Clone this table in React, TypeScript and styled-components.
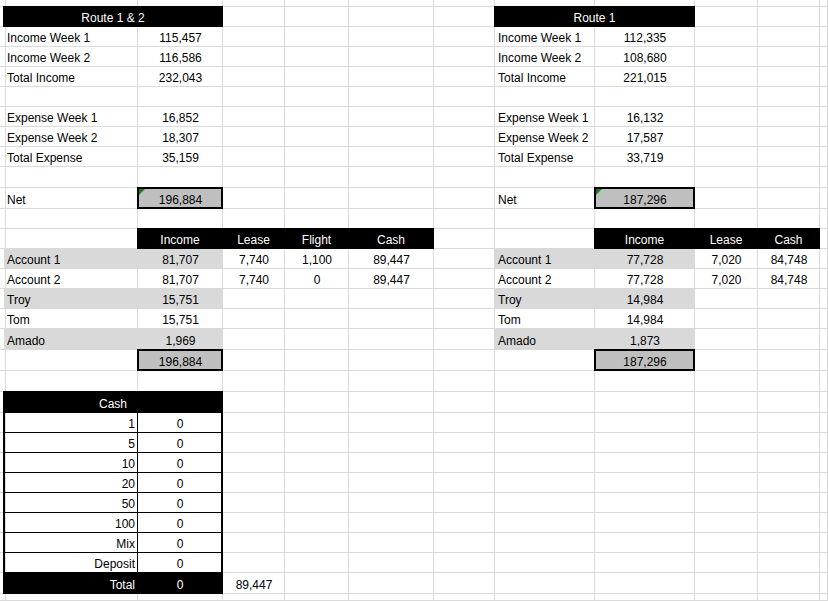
import React from 'react';
import styled, { createGlobalStyle, css } from 'styled-components';

type Kind = 'plain' | 'head' | 'fill' | 'total' | 'cash' | 'cashEnd';
type Align = 'left' | 'center' | 'right';

interface Spec {
  text?: string;
  kind?: Kind;
  align?: Align;
  span?: number;
  flag?: boolean;
}

const GlobalStyle = createGlobalStyle`
  html, body, #root {
    margin: 0;
    height: 100%;
  }
  body {
    background: #fff;
    overflow: hidden;
    font-family: "Liberation Sans", Arial, sans-serif;
  }
`;

// column and row sizes of the visible sheet, including each gridline
const colWidths = [4, 134, 85, 62, 64, 85, 61, 100, 100, 63, 62];
const rowHeights = [7, 20, 20, 20, 20, 20, 20, 20, 20, 21, 21, 20, 20, 20, 20, 20, 20, 21, 21, 21, 21, 20, 20, 20, 20, 20, 20, 20, 20, 21];
const COLS = colWidths.length + 1;
const ROWS = rowHeights.length + 1;

const Sheet = styled.div`
  display: grid;
  width: 100vw;
  height: 100vh;
  grid-template-columns: ${colWidths.map(w => `${w}px`).join(' ')} 1fr;
  grid-template-rows: ${rowHeights.map(h => `${h}px`).join(' ')} 1fr;
  font-size: 12px;
  line-height: 14px;
  color: #000;
`;

const kindStyles: Record<Kind, ReturnType<typeof css>> = {
  plain: css``,
  head: css`
    background: #000;
    color: #fff;
    border-color: #000;
    margin: -1px 0 0 -1px;
  `,
  fill: css`
    background: #d9d9d9;
    border-color: #d9d9d9;
  `,
  total: css`
    background: #bfbfbf;
    border: 2px solid #000;
    margin: -1px 0 0 -1px;
    padding-bottom: 0;
  `,
  cash: css`
    border-right-color: #000;
    border-bottom-color: #000;
    border-left: 2px solid #000;
    margin-left: -1px;
  `,
  cashEnd: css`
    border-right: 2px solid #000;
    border-bottom-color: #000;
  `,
};

const Cell = styled.div<{ $kind: Kind; $align: Align; $span: number; $flag?: boolean }>`
  grid-column: span ${p => p.$span};
  position: relative;
  display: flex;
  align-items: flex-end;
  justify-content: ${p => (p.$align === 'left' ? 'flex-start' : p.$align === 'right' ? 'flex-end' : 'center')};
  padding: 0 2px 1px 3px;
  border-right: 1px solid #dadada;
  border-bottom: 1px solid #dadada;
  white-space: nowrap;
  overflow: hidden;
  min-width: 0;
  ${p => kindStyles[p.$kind]}

  ${p => p.$flag && css`
    &::before {
      content: '';
      position: absolute;
      top: 0;
      left: 0;
      border-top: 6px solid #1e7d1e;
      border-right: 6px solid transparent;
    }
  `}
`;

const cells: Record<string, Spec> = {};
const put = (r: number, c: number, spec: Spec) => {
  cells[`${r}-${c}`] = spec;
};

const block = (
  col: number,
  title: string,
  summary: string[],
  net: string,
  heads: string[],
  accounts: string[][],
  people: string[],
  total: string,
) => {
  put(1, col, { text: title, kind: 'head', span: 2, align: 'center' });
  const labels = ['Income Week 1', 'Income Week 2', 'Total Income', 'Expense Week 1', 'Expense Week 2', 'Total Expense'];
  const rowsAt = [2, 3, 4, 6, 7, 8];
  labels.forEach((label, i) => {
    put(rowsAt[i], col, { text: label });
    put(rowsAt[i], col + 1, { text: summary[i], align: 'center' });
  });
  put(10, col, { text: 'Net' });
  put(10, col + 1, { text: net, kind: 'total', align: 'center', flag: true });
  heads.forEach((h, i) => put(12, col + 1 + i, { text: h, kind: 'head', align: 'center' }));
  accounts.forEach((vals, i) => {
    const r = 13 + i;
    const kind: Kind = i === 0 ? 'fill' : 'plain';
    put(r, col, { text: `Account ${i + 1}`, kind });
    vals.forEach((v, j) => put(r, col + 1 + j, { text: v, align: 'center', kind: j === 0 ? kind : 'plain' }));
  });
  ['Troy', 'Tom', 'Amado'].forEach((name, i) => {
    const r = 15 + i;
    const kind: Kind = i === 1 ? 'plain' : 'fill';
    put(r, col, { text: name, kind });
    put(r, col + 1, { text: people[i], kind, align: 'center' });
  });
  put(18, col + 1, { text: total, kind: 'total', align: 'center' });
};

block(
  1,
  'Route 1 & 2',
  ['115,457', '116,586', '232,043', '16,852', '18,307', '35,159'],
  '196,884',
  ['Income', 'Lease', 'Flight', 'Cash'],
  [
    ['81,707', '7,740', '1,100', '89,447'],
    ['81,707', '7,740', '0', '89,447'],
  ],
  ['15,751', '15,751', '1,969'],
  '196,884',
);

block(
  7,
  'Route 1',
  ['112,335', '108,680', '221,015', '16,132', '17,587', '33,719'],
  '187,296',
  ['Income', 'Lease', 'Cash'],
  [
    ['77,728', '7,020', '84,748'],
    ['77,728', '7,020', '84,748'],
  ],
  ['14,984', '14,984', '1,873'],
  '187,296',
);

// cash count table
put(20, 1, { text: 'Cash', kind: 'head', span: 2, align: 'center' });
['1', '5', '10', '20', '50', '100', 'Mix', 'Deposit'].forEach((note, i) => {
  put(21 + i, 1, { text: note, kind: 'cash', align: 'right' });
  put(21 + i, 2, { text: '0', kind: 'cashEnd', align: 'center' });
});
put(29, 1, { text: 'Total', kind: 'head', align: 'right' });
put(29, 2, { text: '0', kind: 'head', align: 'center' });
put(29, 3, { text: '89,447', align: 'center' });

const App: React.FC = () => {
  const out: React.ReactNode[] = [];
  for (let r = 0; r < ROWS; r++) {
    let skip = 0;
    for (let c = 0; c < COLS; c++) {
      if (skip > 0) {
        skip--;
        continue;
      }
      const spec = cells[`${r}-${c}`] || {};
      const span = spec.span || 1;
      skip = span - 1;
      out.push(
        <Cell
          key={`${r}-${c}`}
          $kind={spec.kind || 'plain'}
          $align={spec.align || 'left'}
          $span={span}
          $flag={spec.flag}
        >
          {spec.text}
        </Cell>,
      );
    }
  }

  return (
    <>
      <GlobalStyle />
      <Sheet>{out}</Sheet>
    </>
  );
};

export default App;
